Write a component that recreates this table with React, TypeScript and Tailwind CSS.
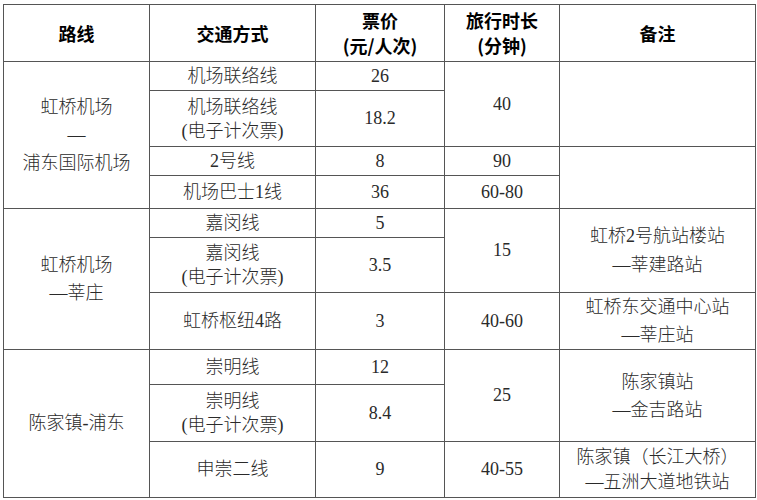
import React from "react";

const body = "font-['Liberation_Serif','Noto_Sans_CJK_SC',serif] text-[18px] text-[#2a2a2a] font-light";
const td = "border border-[#555555] text-center align-middle p-0 " + body;
const th = "border border-[#555555] text-center align-middle p-0 font-['Noto_Sans_CJK_SC',sans-serif] font-bold text-[18px] text-black leading-[25px]";

export default function App() {
  return (
    <div className="pl-[3px] pt-[4px] bg-white w-[757px] h-[500px]">
      <table className="border-collapse border border-[#555555] w-[752px] table-fixed">
        <colgroup>
          <col className="w-[146px]" />
          <col className="w-[166px]" />
          <col className="w-[129px]" />
          <col className="w-[115px]" />
          <col className="w-[196px]" />
        </colgroup>
        <tbody>
          <tr className="h-[57px]">
            <th className={th}>路线</th>
            <th className={th}>交通方式</th>
            <th className={th}>票价<br />(元/人次)</th>
            <th className={th}>旅行时长<br />(分钟)</th>
            <th className={th}>备注</th>
          </tr>
          <tr className="h-[29px]">
            <td className={td + " leading-[28px]"} rowSpan={4}>虹桥机场<br />—<br />浦东国际机场</td>
            <td className={td}>机场联络线</td>
            <td className={td}>26</td>
            <td className={td} rowSpan={2}>40</td>
            <td className={td} rowSpan={2}></td>
          </tr>
          <tr className="h-[56px]">
            <td className={td + " leading-[24px]"}>机场联络线<br />(电子计次票)</td>
            <td className={td}>18.2</td>
          </tr>
          <tr className="h-[29px]">
            <td className={td}>2号线</td>
            <td className={td}>8</td>
            <td className={td}>90</td>
            <td className={td} rowSpan={2}></td>
          </tr>
          <tr className="h-[33px]">
            <td className={td}>机场巴士1线</td>
            <td className={td}>36</td>
            <td className={td}>60-80</td>
          </tr>
          <tr className="h-[29px]">
            <td className={td + " leading-[28px]"} rowSpan={3}>虹桥机场<br />—莘庄</td>
            <td className={td}>嘉闵线</td>
            <td className={td}>5</td>
            <td className={td} rowSpan={2}>15</td>
            <td className={td + " leading-[29px]"} rowSpan={2}>虹桥2号航站楼站<br />—莘建路站</td>
          </tr>
          <tr className="h-[55px]">
            <td className={td + " leading-[24px]"}>嘉闵线<br />(电子计次票)</td>
            <td className={td}>3.5</td>
          </tr>
          <tr className="h-[56px]">
            <td className={td}>虹桥枢纽4路</td>
            <td className={td}>3</td>
            <td className={td}>40-60</td>
            <td className={td + " leading-[28px]"}>虹桥东交通中心站<br />—莘庄站</td>
          </tr>
          <tr className="h-[35px]">
            <td className={td} rowSpan={3}>陈家镇-浦东</td>
            <td className={td}>崇明线</td>
            <td className={td}>12</td>
            <td className={td} rowSpan={2}>25</td>
            <td className={td + " leading-[28px]"} rowSpan={2}>陈家镇站<br />—金吉路站</td>
          </tr>
          <tr className="h-[57px]">
            <td className={td + " leading-[24px]"}>崇明线<br />(电子计次票)</td>
            <td className={td}>8.4</td>
          </tr>
          <tr className="h-[56px]">
            <td className={td}>申崇二线</td>
            <td className={td}>9</td>
            <td className={td}>40-55</td>
            <td className={td + " leading-[25px]"}>陈家镇（长江大桥）<br />—五洲大道地铁站</td>
          </tr>
        </tbody>
      </table>
    </div>
  );
}
